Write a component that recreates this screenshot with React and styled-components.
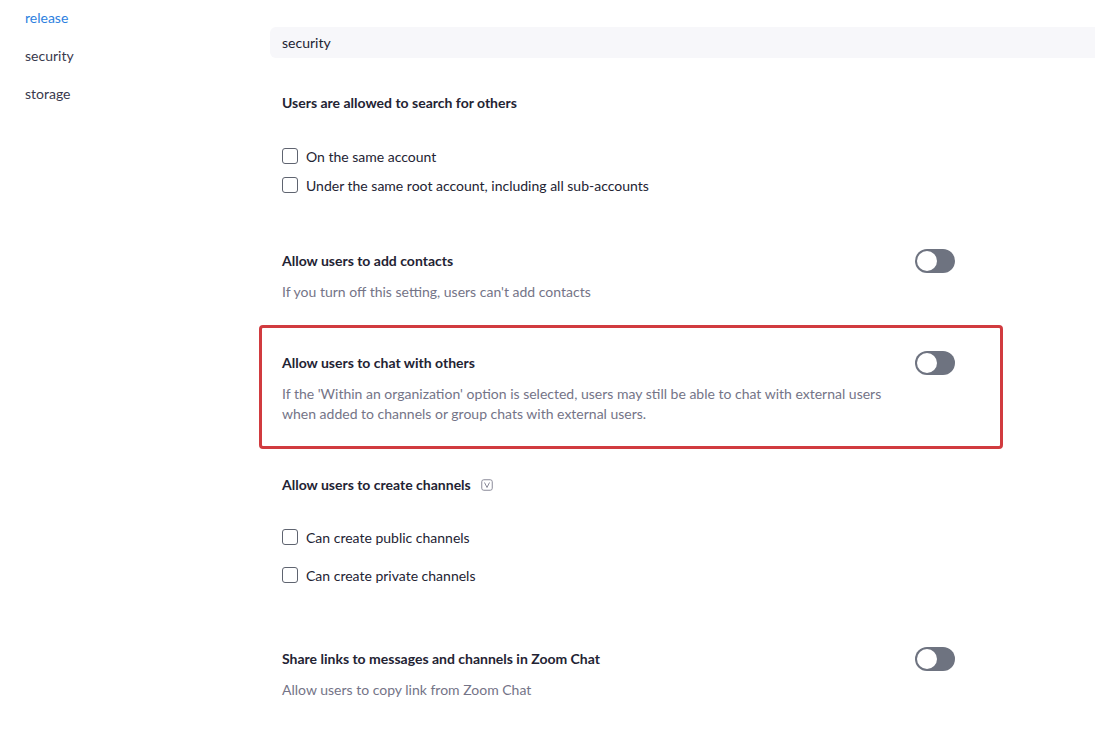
import React from "react";
import styled, { createGlobalStyle } from "styled-components";

const GlobalStyle = createGlobalStyle`
  body {
    margin: 0;
    background: #ffffff;
    font-family: Lato, "Open Sans", "Liberation Sans", sans-serif;
    color: #232333;
  }
`;

const Page = styled.div`
  display: flex;
  width: 1095px;
  height: 737px;
  overflow: hidden;
`;

const Sidebar = styled.nav`
  width: 270px;
  flex-shrink: 0;
  padding: 8px 0 0 25px;
  box-sizing: border-box;
  display: flex;
  flex-direction: column;
  gap: 18px;
`;

const NavItem = styled.div`
  font-size: 14px;
  line-height: 20px;
  color: ${props => (props.active ? "#2d7fe0" : "#39394d")};
`;

const Main = styled.main`
  flex: 1;
  padding-top: 27px;
  min-width: 0;
`;

const HeaderBar = styled.div`
  height: 31px;
  background: #f7f7fa;
  border-radius: 6px 0 0 6px;
  display: flex;
  align-items: center;
  padding-left: 12px;
  font-size: 14px;
  color: #232333;
`;

const Content = styled.div`
  width: 673px;
  padding-left: 12px;
`;

const Section = styled.section`
  position: relative;
  margin-top: ${props => props.top}px;

  ${props =>
    props.highlighted &&
    `
    &::after {
      content: "";
      position: absolute;
      top: -28px;
      left: -23px;
      right: -48px;
      bottom: -25px;
      border: 3px solid #d13b3f;
      border-radius: 4px;
      pointer-events: none;
    }
  `}
`;

const TitleRow = styled.div`
  display: flex;
  align-items: center;
  justify-content: space-between;
  height: 20px;
`;

const Title = styled.div`
  display: flex;
  align-items: center;
  gap: 10px;
  font-size: 14px;
  font-weight: 700;
  line-height: 20px;
  color: #232333;
`;

const Description = styled.p`
  margin: 11px 0 0;
  max-width: 612px;
  font-size: 14px;
  line-height: 20px;
  color: #747487;
`;

const OptionList = styled.div`
  display: flex;
  flex-direction: column;
  gap: ${props => props.gap}px;
  margin-top: ${props => props.top}px;
`;

const Option = styled.label`
  display: flex;
  align-items: center;
  gap: 8px;
  height: 20px;
  font-size: 14px;
  color: #232333;
`;

const Box = styled.span`
  width: 16px;
  height: 16px;
  box-sizing: border-box;
  border: 1.5px solid #5f6470;
  border-radius: 3px;
  background: #fff;
  flex-shrink: 0;
`;

const Track = styled.span`
  position: relative;
  width: 40px;
  height: 24px;
  border-radius: 12px;
  background: #6e7380;
  flex-shrink: 0;
`;

const Knob = styled.span`
  position: absolute;
  top: 2px;
  left: 2px;
  width: 20px;
  height: 20px;
  border-radius: 50%;
  background: #fff;
`;

const Toggle = () => (
  <Track>
    <Knob />
  </Track>
);

const VersionIcon = () => (
  <svg width="12" height="12" viewBox="0 0 12 12" fill="none">
    <rect x="0.75" y="0.75" width="10.5" height="10.5" rx="2" stroke="#8a8a99" strokeWidth="1" />
    <polyline points="3.5,3.5 6,8.5 8.5,3.5" stroke="#8a8a99" strokeWidth="1" fill="none" />
  </svg>
);

const CheckOption = ({ children }) => (
  <Option>
    <Box />
    {children}
  </Option>
);

export default function App() {
  return (
    <>
      <GlobalStyle />
      <Page>
        <Sidebar>
          <NavItem active>release</NavItem>
          <NavItem>security</NavItem>
          <NavItem>storage</NavItem>
        </Sidebar>
        <Main>
          <HeaderBar>security</HeaderBar>
          <Content>
            <Section top={35}>
              <Title>Users are allowed to search for others</Title>
              <OptionList top={33} gap={9}>
                <CheckOption>On the same account</CheckOption>
                <CheckOption>Under the same root account, including all sub-accounts</CheckOption>
              </OptionList>
            </Section>

            <Section top={56}>
              <TitleRow>
                <Title>Allow users to add contacts</Title>
                <Toggle />
              </TitleRow>
              <Description>If you turn off this setting, users can't add contacts</Description>
            </Section>

            <Section top={51} highlighted>
              <TitleRow>
                <Title>Allow users to chat with others</Title>
                <Toggle />
              </TitleRow>
              <Description>
                If the 'Within an organization' option is selected, users may still be able to chat with
                external users when added to channels or group chats with external users.
              </Description>
            </Section>

            <Section top={51}>
              <Title>
                Allow users to create channels
                <VersionIcon />
              </Title>
              <OptionList top={32} gap={18}>
                <CheckOption>Can create public channels</CheckOption>
                <CheckOption>Can create private channels</CheckOption>
              </OptionList>
            </Section>

            <Section top={64}>
              <TitleRow>
                <Title>Share links to messages and channels in Zoom Chat</Title>
                <Toggle />
              </TitleRow>
              <Description>Allow users to copy link from Zoom Chat</Description>
            </Section>
          </Content>
        </Main>
      </Page>
    </>
  );
}
